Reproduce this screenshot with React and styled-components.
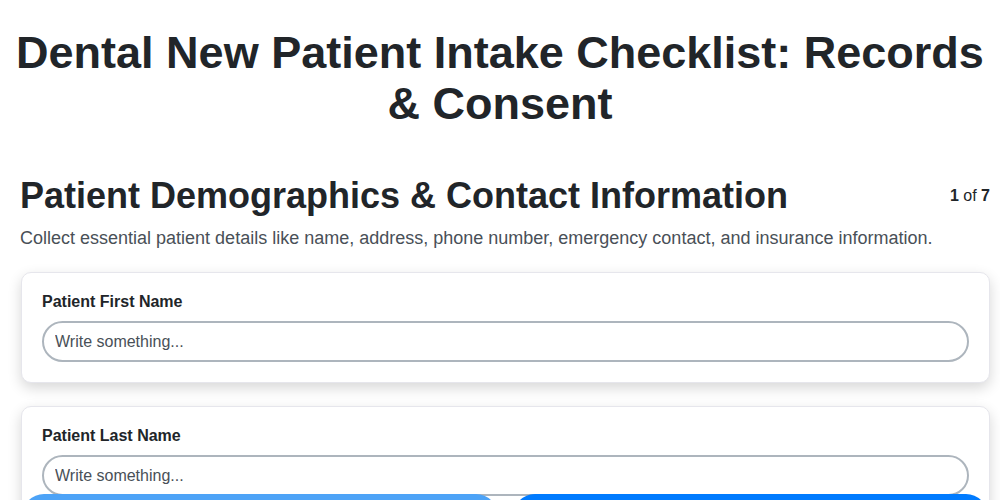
import React from "react";
import styled, { createGlobalStyle } from "styled-components";

const Global = createGlobalStyle`
  html, body { margin: 0; padding: 0; background: #ffffff; }
  body { font-family: "Liberation Sans", Arial, sans-serif; color: #212529; }
  * { box-sizing: border-box; }
`;

const Page = styled.div`
  padding: 27px 10px 120px 21px;
`;

const Title = styled.h1`
  margin: 0 -10px 46px -21px;
  text-align: center;
  font-size: 45px;
  line-height: 51px;
  font-weight: 700;
  color: #212529;
`;

const HeaderRow = styled.div`
  display: flex;
  align-items: center;
  justify-content: space-between;
  margin-left: -1px;
`;

const SectionTitle = styled.h2`
  margin: 0;
  font-size: 36px;
  line-height: 42px;
  font-weight: 700;
  color: #212529;
`;

const Counter = styled.div`
  font-size: 16px;
  color: #212529;
  b { font-weight: 700; }
`;

const Description = styled.p`
  margin: 9px 0 22px -1px;
  font-size: 18px;
  line-height: 24px;
  color: #495057;
`;

const CardList = styled.div`
  display: flex;
  flex-direction: column;
  gap: 23px;
`;

const Card = styled.div`
  background: #fff;
  border: 1px solid #e6e6ec;
  border-radius: 10px;
  padding: 20px;
  box-shadow: 0 5px 14px rgba(0, 0, 0, 0.16);
`;

const Label = styled.label`
  display: block;
  font-size: 16px;
  line-height: 18px;
  font-weight: 700;
  color: #212529;
  margin: 0 0 10px 0;
`;

const Input = styled.input`
  display: block;
  width: 100%;
  height: 41px;
  border: 2px solid #adb5bd;
  border-radius: 21px;
  padding: 0 11px;
  font-family: "Liberation Sans", Arial, sans-serif;
  font-size: 16px;
  color: #212529;
  background: #fff;
  outline: none;
  &::placeholder { color: #495057; opacity: 1; }
`;

const Footer = styled.div`
  position: fixed;
  left: 22px;
  right: 12px;
  top: 494px;
  display: flex;
  gap: 15px;
`;

const NavButton = styled.button`
  flex: 1;
  height: 48px;
  border: none;
  border-radius: 22px;
  background: ${(p) => (p.$muted ? "#4da3f7" : "#007bff")};
  color: #fff;
  font-family: "Liberation Sans", Arial, sans-serif;
  font-size: 16px;
  font-weight: 700;
`;

const fields = ["Patient First Name", "Patient Last Name", "Date of Birth"];

export default function App() {
  return (
    <>
      <Global />
      <Page>
        <Title>Dental New Patient Intake Checklist: Records &amp; Consent</Title>
        <HeaderRow>
          <SectionTitle>Patient Demographics &amp; Contact Information</SectionTitle>
          <Counter>
            <b>1</b> of <b>7</b>
          </Counter>
        </HeaderRow>
        <Description>
          Collect essential patient details like name, address, phone number, emergency contact, and insurance information.
        </Description>
        <CardList>
          {fields.map((f) => (
            <Card key={f}>
              <Label>{f}</Label>
              <Input placeholder="Write something..." />
            </Card>
          ))}
        </CardList>
      </Page>
      <Footer>
        <NavButton $muted>Previous</NavButton>
        <NavButton>Next</NavButton>
      </Footer>
    </>
  );
}
